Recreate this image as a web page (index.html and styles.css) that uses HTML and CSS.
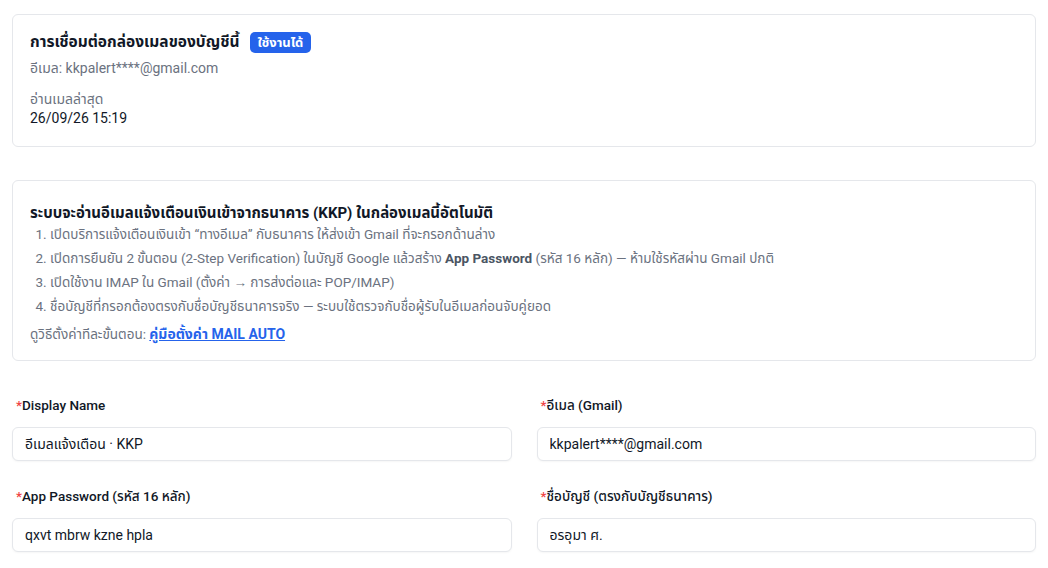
FILE: index.html
```html
<!DOCTYPE html>
<html lang="th">
<head>
    <meta charset="UTF-8">
    <title>Mail Auto</title>
    <link rel="stylesheet" href="styles.css">
</head>
<body>

    <!-- Connection status -->
    <div class="card status-card">
        <div class="status-title">
            <h3>การเชื่อมต่อกล่องเมลของบัญชีนี้</h3>
            <span class="badge">ใช้งานได้</span>
        </div>
        <div class="muted">อีเมล: kkpalert****@gmail.com</div>
        <div class="last-read">
            <div class="muted">อ่านเมลล่าสุด</div>
            <div class="value">26/09/26 15:19</div>
        </div>
    </div>

    <!-- Setup guide -->
    <div class="card guide-card">
        <h4>ระบบจะอ่านอีเมลแจ้งเตือนเงินเข้าจากธนาคาร (KKP) ในกล่องเมลนี้อัตโนมัติ</h4>
        <ol>
            <li>เปิดบริการแจ้งเตือนเงินเข้า “ทางอีเมล” กับธนาคาร ให้ส่งเข้า Gmail ที่จะกรอกด้านล่าง</li>
            <li>เปิดการยืนยัน 2 ขั้นตอน (2-Step Verification) ในบัญชี Google แล้วสร้าง <b>App Password</b> (รหัส 16 หลัก) — ห้ามใช้รหัสผ่าน Gmail ปกติ</li>
            <li>เปิดใช้งาน IMAP ใน Gmail (ตั้งค่า → การส่งต่อและ POP/IMAP)</li>
            <li>ชื่อบัญชีที่กรอกต้องตรงกับชื่อบัญชีธนาคารจริง — ระบบใช้ตรวจกับชื่อผู้รับในอีเมลก่อนจับคู่ยอด</li>
        </ol>
        <div class="guide-link">ดูวิธีตั้งค่าทีละขั้นตอน: <a href="#">คู่มือตั้งค่า MAIL AUTO</a></div>
    </div>

    <!-- Form -->
    <div class="form-grid">
        <div class="field">
            <label><span class="req">*</span>Display Name</label>
            <input type="text" value="อีเมลแจ้งเตือน · KKP">
        </div>
        <div class="field">
            <label><span class="req">*</span>อีเมล (Gmail)</label>
            <input type="text" value="kkpalert****@gmail.com">
        </div>
        <div class="field">
            <label><span class="req">*</span>App Password (รหัส 16 หลัก)</label>
            <input type="text" value="qxvt mbrw kzne hpla">
        </div>
        <div class="field">
            <label><span class="req">*</span>ชื่อบัญชี (ตรงกับบัญชีธนาคาร)</label>
            <input type="text" value="อรอุมา ศ.">
        </div>
    </div>

</body>
</html>
```

FILE: styles.css
```css
body {
    margin: 0;
    padding: 14px 12px;
    background-color: #fff;
    color: #111827;
    font-family: Roboto, "Noto Sans Thai", "Noto Sans", sans-serif;
    font-size: 14px;
}
.card {
    border: 1px solid #e5e7eb;
    border-radius: 6px;
    background-color: #fff;
}
.status-card {
    padding: 16px 17px 18px;
    height: 133px;
    box-sizing: border-box;
}
.status-title {
    display: flex;
    align-items: center;
    gap: 10px;
    margin-bottom: 4px;
}
.status-title h3 {
    margin: 0;
    font-size: 15.5px;
    font-weight: 700;
}
.badge {
    background-color: #2563eb;
    color: #fff;
    font-size: 13px;
    font-weight: 700;
    line-height: 17px;
    padding: 2px 8px;
    border-radius: 5px;
}
.muted {
    color: #6b7280;
    font-size: 14px;
}
.last-read {
    margin-top: 10px;
}
.last-read .value {
    font-size: 14px;
    color: #111827;
}
.guide-card {
    margin-top: 33px;
    padding: 23px 17px 14px;
}
.guide-card h4 {
    margin: 0;
    font-size: 15px;
    font-weight: 700;
    line-height: 18px;
}
.guide-card ol {
    margin: 0;
    padding-left: 20px;
    color: #6b7280;
    font-size: 13.5px;
    line-height: 24px;
}
.guide-card b {
    color: #4b5563;
}
.guide-link {
    margin-top: 4px;
    color: #6b7280;
    font-size: 13.5px;
    line-height: 24px;
}
.guide-link a {
    color: #2563eb;
    font-size: 14px;
    font-weight: 700;
}
.form-grid {
    margin-top: 34px;
    display: grid;
    grid-template-columns: 1fr 1fr;
    column-gap: 25px;
    row-gap: 25px;
}
.field label {
    display: block;
    font-size: 13.5px;
    font-weight: 500;
    line-height: 20px;
    margin-bottom: 12px;
    padding-left: 4px;
}
.req {
    color: #ef4444;
}
.field input {
    display: block;
    width: 100%;
    box-sizing: border-box;
    height: 34px;
    padding: 0 12px;
    border: 1px solid #e5e7eb;
    border-radius: 6px;
    font-family: inherit;
    font-size: 14px;
    color: #111827;
    box-shadow: 0 1px 2px rgba(0, 0, 0, 0.04);
}
```
